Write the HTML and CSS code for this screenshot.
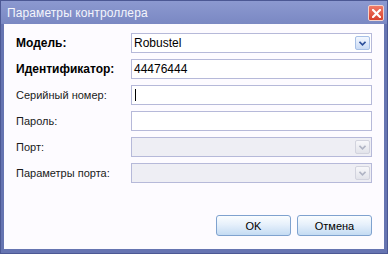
FILE: index.html
```html
<!DOCTYPE html>
<html lang="ru">
<head>
  <meta charset="UTF-8">
  <title>Параметры контроллера</title>
  <link rel="stylesheet" href="styles.css">
</head>
<body>
  <div class="window">
    <div class="titlebar">
      <span class="title">Параметры контроллера</span>
      <span class="close">
        <svg width="9" height="9" viewBox="0 0 9 9"><path d="M1 1L8 8M8 1L1 8" stroke="#fff" stroke-width="2.2" stroke-linecap="square"/></svg>
      </span>
    </div>
    <div class="client">
      <div class="form">
        <span class="label bold">Модель:</span>
        <div class="field">
          <span class="text">Robustel</span>
          <span class="drop"><svg width="7" height="5" viewBox="0 0 7 5"><path d="M0.5 0.8L3.5 3.8L6.5 0.8" fill="none" stroke="#2c4f9a" stroke-width="1.6"/></svg></span>
        </div>
        <span class="label bold">Идентификатор:</span>
        <div class="field"><span class="text">44476444</span></div>
        <span class="label">Серийный номер:</span>
        <div class="field"><span class="caret"></span></div>
        <span class="label">Пароль:</span>
        <div class="field"></div>
        <span class="label">Порт:</span>
        <div class="field disabled">
          <span class="drop"><svg width="7" height="5" viewBox="0 0 7 5"><path d="M0.5 0.8L3.5 3.8L6.5 0.8" fill="none" stroke="#b0b4c4" stroke-width="1.6"/></svg></span>
        </div>
        <span class="label">Параметры порта:</span>
        <div class="field disabled">
          <span class="drop"><svg width="7" height="5" viewBox="0 0 7 5"><path d="M0.5 0.8L3.5 3.8L6.5 0.8" fill="none" stroke="#b0b4c4" stroke-width="1.6"/></svg></span>
        </div>
      </div>
      <div class="buttons">
        <button class="btn">OK</button>
        <button class="btn">Отмена</button>
      </div>
    </div>
  </div>
</body>
</html>
```

FILE: styles.css
```css
body {
  margin: 0;
  font-family: Tahoma, "DejaVu Sans", "Liberation Sans", sans-serif;
  font-size: 11px;
}
.window {
  width: 388px;
  height: 254px;
  box-sizing: border-box;
  display: flex;
  flex-direction: column;
  background: #6674b1;
  border: 1px solid #4c5894;
}
.titlebar {
  height: 23px;
  display: flex;
  align-items: center;
  justify-content: space-between;
  padding: 0 3px 0 6px;
  background: linear-gradient(#8c99d0, #7a88c3);
}
.title {
  color: #f4f5fc;
  font-family: "Liberation Sans", sans-serif;
  font-size: 12px;
  letter-spacing: 0.1px;
}
.close {
  width: 16px;
  height: 16px;
  box-sizing: border-box;
  display: flex;
  align-items: center;
  justify-content: center;
  border: 1px solid #f3d2cc;
  border-radius: 2px;
  background: linear-gradient(#f07a68, #d8402c);
  margin-top: 1px;
}
.client {
  flex: 1;
  margin: 0 3px 4px 3px;
  background: #fdfbff;
  display: flex;
  flex-direction: column;
  padding: 9px 12px 13px 12px;
}
.form {
  display: grid;
  grid-template-columns: 115px 1fr;
  row-gap: 6px;
}
.label {
  display: flex;
  align-items: center;
  color: #1a1a1a;
  font-family: "Liberation Sans", sans-serif;
  font-size: 11px;
}
.bold {
  font-weight: bold;
  color: #000;
  font-size: 12px;
}
.field {
  height: 20px;
  box-sizing: border-box;
  border: 1px solid #b6b9d9;
  background: #fff;
  display: flex;
  align-items: center;
  padding: 0 1px 0 2px;
  font-family: "Liberation Sans", sans-serif;
  font-size: 12px;
  color: #000;
}
.text {
  flex: 1;
}
.caret {
  width: 1px;
  height: 12px;
  background: #000;
  margin-left: 1px;
}
.disabled {
  background: #eeeef4;
  justify-content: flex-end;
}
.drop {
  width: 15px;
  height: 14px;
  box-sizing: border-box;
  border: 1px solid #a7c0e6;
  border-radius: 2px;
  background: linear-gradient(#f4f8ff, #c9daf4);
  display: flex;
  align-items: center;
  justify-content: center;
}
.disabled .drop {
  border-color: #d2d3de;
  background: linear-gradient(#f7f7fa, #e2e3ea);
}
.buttons {
  margin-top: auto;
  display: flex;
  justify-content: flex-end;
  gap: 6px;
}
.btn {
  width: 75px;
  height: 21px;
  border: 1px solid #7fa2cf;
  border-radius: 3px;
  background: linear-gradient(#fbfdff 0%, #e6f0fb 45%, #c4dbf3 100%);
  font-family: "Liberation Sans", sans-serif;
  font-size: 11px;
  color: #000;
  padding: 0;
}
```
